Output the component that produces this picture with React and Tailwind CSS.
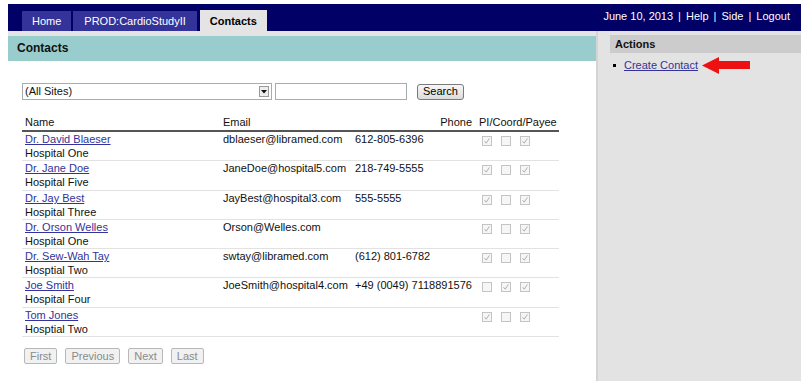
import React from "react";

const rows = [
  { name: "Dr. David Blaeser", site: "Hospital One", email: "dblaeser@libramed.com", phone: "612-805-6396", cb: [1, 0, 1], h: "h-[29px]" },
  { name: "Dr. Jane Doe", site: "Hospital Five", email: "JaneDoe@hospital5.com", phone: "218-749-5555", cb: [1, 0, 1], h: "h-[30px]" },
  { name: "Dr. Jay Best", site: "Hospital Three", email: "JayBest@hospital3.com", phone: "555-5555", cb: [1, 0, 1], h: "h-[29px]" },
  { name: "Dr. Orson Welles", site: "Hospital One", email: "Orson@Welles.com", phone: "", cb: [1, 0, 1], h: "h-[29px]" },
  { name: "Dr. Sew-Wah Tay", site: "Hosptial Two", email: "swtay@libramed.com", phone: "(612) 801-6782", cb: [1, 0, 1], h: "h-[29px]" },
  { name: "Joe Smith", site: "Hospital Four", email: "JoeSmith@hospital4.com", phone: "+49 (0049) 7118891576", cb: [0, 1, 1], h: "h-[30px]" },
  { name: "Tom Jones", site: "Hosptial Two", email: "", phone: "", cb: [1, 0, 1], h: "h-[29px]" },
];

function Box({ checked }) {
  return (
    <span className="inline-block w-[10px] h-[10px] border border-[#c4c4c4] bg-[#f6f6f6] relative">
      {checked ? (
        <svg width="8" height="8" viewBox="0 0 8 8" className="absolute left-0 top-0">
          <path d="M1.6 4.2 L3.2 6.2 L6.4 1.4" fill="none" stroke="#a8a8a8" strokeWidth="0.9" />
        </svg>
      ) : null}
    </span>
  );
}

function PageBtn({ children }) {
  return (
    <span className="inline-flex items-center h-[16px] px-[5px] border border-[#b8b8b8] rounded-[2px] bg-[#f1f1f1] text-[#8a8a8a] text-[11px] leading-[13px]">
      {children}
    </span>
  );
}

export default function App() {
  return (
    <div className="w-[807px] h-[386px] bg-white pl-[8px] pr-[6px] pt-[4px] font-['Liberation_Sans',Arial,sans-serif] text-[11px] leading-[13px] text-[#111]">
      {/* Top navy bar */}
      <div className="h-[27px] bg-[#000066] flex justify-between pl-[14px] pr-[11px]">
        <div className="flex items-end">
          <div className="h-[20px] px-[10px] bg-[#333399] text-white flex items-center">Home</div>
          <div className="h-[20px] px-[11px] ml-[2px] bg-[#333399] text-white flex items-center">PROD:CardioStudyII</div>
          <div className="h-[21px] px-[10px] ml-[3px] bg-[#e4e4e4] text-black font-bold flex items-center pt-[1px]">Contacts</div>
        </div>
        <div className="text-white mt-[6px] flex">
          <span>June 10, 2013</span>
          <span className="mx-[5px]">|</span>
          <span>Help</span>
          <span className="mx-[5px]">|</span>
          <span>Side</span>
          <span className="mx-[5px]">|</span>
          <span>Logout</span>
        </div>
      </div>

      {/* Body */}
      <div className="flex h-[350px]">
        {/* Main */}
        <div className="w-[588px] flex flex-col">
          <div className="h-[5px] bg-[#e4e4e4]" />
          <div className="h-[25px] bg-[#99cccc] pl-[9px] flex items-center font-bold text-[12px]">Contacts</div>

          <div className="pl-[14px]">
            {/* filter row */}
            <div className="flex items-center mt-[22px] h-[17px]">
              <div className="w-[250px] h-[17px] border border-[#a5acb2] bg-white flex items-center justify-between pl-[2px] pr-[2px]">
                <span>(All Sites)</span>
                <span className="w-[10px] h-[11px] border border-[#9a9a9a] bg-[#eeeeee] flex items-center justify-center">
                  <svg width="6" height="4" viewBox="0 0 6 4">
                    <path d="M0 0 L6 0 L3 3.5 Z" fill="#111" />
                  </svg>
                </span>
              </div>
              <div className="w-[132px] h-[17px] ml-[3px] border border-[#a5acb2] bg-white" />
              <div className="ml-[10px] h-[16px] px-[5px] flex items-center border border-[#7a7a7a] rounded-[3px] bg-gradient-to-b from-[#f7f7f7] to-[#dcdcdc] text-black">
                Search
              </div>
            </div>

            {/* table */}
            <div className="mt-[14px] w-[537px]">
              <div className="grid grid-cols-[200px_132px_122px_83px] h-[18px] items-end border-b-2 border-[#555] pb-[1px]">
                <div className="pl-[3px]">Name</div>
                <div className="pl-[1px]">Email</div>
                <div className="text-right pr-[4px]">Phone</div>
                <div className="pl-[3px]">PI/Coord/Payee</div>
              </div>
              {rows.map((r) => (
                <div key={r.name} className={`grid grid-cols-[200px_132px_122px_83px] ${r.h} border-b border-[#e2e2e2] leading-[14px]`}>
                  <div className="pl-[3px]">
                    <div className="text-[#333399] underline">{r.name}</div>
                    <div>{r.site}</div>
                  </div>
                  <div className="pl-[1px]">{r.email}</div>
                  <div className="pl-[1px]">{r.phone}</div>
                  <div className="pl-[6px] pt-[4px] flex gap-[9px] items-start">
                    {r.cb.map((c, i) => (
                      <Box key={i} checked={c} />
                    ))}
                  </div>
                </div>
              ))}
            </div>

            {/* pagination */}
            <div className="flex gap-[8px] mt-[11px] pl-[2px]">
              <PageBtn>First</PageBtn>
              <PageBtn>Previous</PageBtn>
              <PageBtn>Next</PageBtn>
              <PageBtn>Last</PageBtn>
            </div>
          </div>
        </div>

        {/* Sidebar */}
        <div className="w-[205px] bg-[#e3e3e3] border-l-2 border-[#d4d4d4] pt-[4px] pl-[12px]">
          <div className="h-[18px] bg-[#cccccc] pl-[5px] flex items-center font-bold">Actions</div>
          <div className="flex items-center h-[13px] mt-[6px] pl-[3px]">
            <span className="w-[3px] h-[3px] bg-black" />
            <span className="ml-[8px] text-[#333399] underline">Create Contact</span>
            <svg width="48" height="17" viewBox="0 0 48 17" className="ml-[4px] shrink-0">
              <polygon points="0,8.5 17,0 17,4 48,4 48,12 17,12 17,17" fill="#ee1111" />
            </svg>
          </div>
        </div>
      </div>
    </div>
  );
}
